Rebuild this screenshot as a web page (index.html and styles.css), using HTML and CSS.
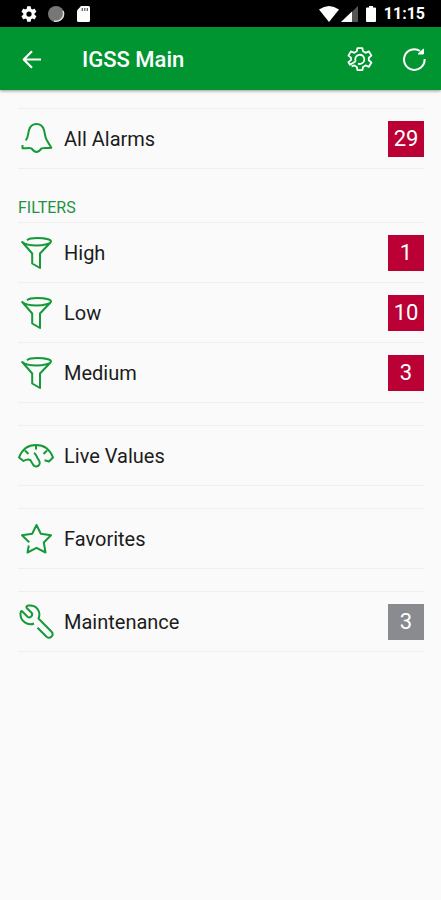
FILE: index.html
```
<!DOCTYPE html>
<html lang="en">
<head>
  <meta charset="UTF-8">
  <meta name="viewport" content="width=device-width, initial-scale=1.0">
  <title>IGSS Main</title>
  <link rel="stylesheet" href="styles.css">
</head>
<body>
  <!-- icons used more than once -->
  <svg class="sprite" aria-hidden="true">
    <symbol id="funnel" viewBox="0 0 36 36">
      <path d="M9 5.200C11 3.600 15 3 19 3c8 0 14 1.500 14 3.500S26 10.500 18.500 10.500C11 10.500 6.500 9 4.200 7L14.200 18.500V28.500L22 33V18.500L32.500 7.500"/>
    </symbol>
  </svg>

  <div class="status-bar">
    <div class="status-group">
      <svg class="status-icon" viewBox="0 0 24 24" aria-hidden="true">
        <path fill="#fff" d="M19.400 13a7.500 7.500 0 0 0 0-2l2.200-1.700a.5.5 0 0 0 .1-.6l-2.100-3.600a.5.5 0 0 0-.6-.2l-2.500 1a7.500 7.500 0 0 0-1.700-1L14.400 2.200a.5.500 0 0 0-.5-.4h-4a.5.500 0 0 0-.5.4L9 4.900a8 8 0 0 0-1.700 1l-2.500-1a.5.500 0 0 0-.6.2L2.100 8.700a.5.500 0 0 0 .1.600L4.400 11a7.500 7.500 0 0 0 0 2l-2.200 1.700a.5.500 0 0 0-.1.600l2.100 3.600c.1.200.4.300.6.200l2.500-1a7.500 7.500 0 0 0 1.700 1l.4 2.700c0 .2.200.4.500.4h4c.3 0 .5-.2.500-.4l.4-2.700a8 8 0 0 0 1.700-1l2.500 1c.2.100.5 0 .6-.2l2.100-3.600a.5.500 0 0 0-.1-.6zM12 15.500a3.500 3.500 0 1 1 0-7 3.500 3.500 0 0 1 0 7z"/>
      </svg>
      <svg class="status-icon" viewBox="0 0 18 18" aria-hidden="true">
        <circle cx="9" cy="9" r="8" fill="#777"/>
        <path d="M16 6a7.500 7.500 0 0 1-9 10" fill="none" stroke="#ddd" stroke-width="1.500"/>
      </svg>
      <svg class="status-icon" viewBox="0 0 18 18" aria-hidden="true">
        <path fill="#fff" d="M7 1h7.500a1.500 1.500 0 0 1 1.500 1.500v13a1.500 1.500 0 0 1-1.500 1.500h-10A1.500 1.500 0 0 1 3 15.500V5.500z"/>
        <path stroke="#555" stroke-width="1.200" d="M8.300 3v3M10.800 3v3M13.300 3v3"/>
      </svg>
    </div>
    <div class="status-group status-right">
      <svg class="wifi" viewBox="0 0 20 18" aria-hidden="true">
        <path fill="#fff" d="M0 4.500Q10-2.500 20 4.500L10 17z"/>
      </svg>
      <svg class="signal" viewBox="0 0 17 18" aria-hidden="true">
        <path fill="#555" d="M17 1v16H0z"/>
        <path fill="#fff" d="M11 6.600V17H0z"/>
      </svg>
      <svg class="battery" viewBox="0 0 12 18" aria-hidden="true">
        <path fill="#fff" d="M4 1h4v1.500h2a1 1 0 0 1 1 1V16a1 1 0 0 1-1 1H2a1 1 0 0 1-1-1V3.500a1 1 0 0 1 1-1h2z"/>
      </svg>
      <span class="clock">11:15</span>
    </div>
  </div>

  <header class="app-bar">
    <button class="icon-btn" type="button" aria-label="Back">
      <svg class="bar-icon" viewBox="0 0 28 28" aria-hidden="true">
        <path stroke-width="2.200" d="M23 13.500H6M14 5.200L5.700 13.500l8.300 8.300"/>
      </svg>
    </button>
    <h1>IGSS Main</h1>
    <button class="icon-btn" type="button" aria-label="Settings">
      <svg class="bar-icon" viewBox="0 0 28 28" aria-hidden="true">
        <path d="M9.500 15.500l-5.600 3.200-1.500-2.600 2.600-2v-2.500l-2.600-2 2.500-4.200 3.400 1.400 2.500-1.500.6-3.200h5l.6 3.200 2.500 1.500 3.400-1.400 2.500 4.200-2.600 2.200v2.500l2.600 2.200-2.500 4.300-3.400-1.400-2.500 1.500-.6 3.300h-5l-.6-3.300-2.500-1.500-2.700 1"/>
        <path d="M9.700 15.500A4.600 4.600 0 1 1 12 17.600"/>
      </svg>
    </button>
    <button class="icon-btn" type="button" aria-label="Refresh">
      <svg class="bar-icon" viewBox="0 0 28 28" aria-hidden="true">
        <path stroke-width="2" d="M24.600 13A10.300 10.300 0 1 1 20 5"/>
        <path fill="#fff" stroke-width="1" d="M23.500 3v5h-5.300z"/>
      </svg>
    </button>
  </header>

  <main>
    <nav class="list">
      <a class="row" href="#alarms">
        <svg class="row-icon" viewBox="0 0 36 36" aria-hidden="true">
          <path d="M7.700 19.500C10.500 16 10 12.500 11 9 12.200 5 15 3 18.500 3S24.800 5 26 9c1 3.500.8 6.500 2.700 10L33.300 26.800C30 27.500 27 26.600 23.500 27.400 22 29.500 20.500 31 18.500 31S15 29.500 13.500 27.400C10.500 26.600 8 27.500 4.500 27.200V24"/>
        </svg>
        <span class="label">All Alarms</span>
        <span class="badge">29</span>
      </a>
    </nav>

    <h2>FILTERS</h2>
    <nav class="list">
      <a class="row" href="#high">
        <svg class="row-icon" aria-hidden="true"><use href="#funnel"/></svg>
        <span class="label">High</span>
        <span class="badge">1</span>
      </a>
      <a class="row" href="#low">
        <svg class="row-icon" aria-hidden="true"><use href="#funnel"/></svg>
        <span class="label">Low</span>
        <span class="badge">10</span>
      </a>
      <a class="row" href="#medium">
        <svg class="row-icon" aria-hidden="true"><use href="#funnel"/></svg>
        <span class="label">Medium</span>
        <span class="badge">3</span>
      </a>
    </nav>

    <nav class="list">
      <a class="row" href="#live">
        <svg class="row-icon" viewBox="0 0 36 36" aria-hidden="true">
          <path d="M26.500 22.300l4.500 1.200L35 19.500C32 11.500 26.500 7 18 7S4 11.500 1 19.500l4.500 3.500C8 21.500 10 21 12.300 22L15 26.500c1 2.300 4.800 2.800 6.200.3 1-1.800.5-3.500-.7-5.300C18.500 20 19 16.500 16 14.800M18 7.500v4M7 12.500l3.500 3.500M29 12.500L25.500 16"/>
        </svg>
        <span class="label">Live Values</span>
      </a>
    </nav>

    <nav class="list">
      <a class="row" href="#favorites">
        <svg class="row-icon" viewBox="0 0 36 36" aria-hidden="true">
          <path d="M11.200 21.200L4 14.300l10.200-1.500L18.500 4l4.300 8.800L33 14.300l-7.200 7.200 1.700 10-9-4.700-9 4.700 1.300-7"/>
        </svg>
        <span class="label">Favorites</span>
      </a>
    </nav>

    <nav class="list">
      <a class="row" href="#maintenance">
        <svg class="row-icon" viewBox="0 0 36 36" aria-hidden="true">
          <path d="M16 19.500C10 22 2 17.500 2.500 9.500c0-2 .8-3 1.800-2l5.500 5.500c2 1.500 5.500-1.500 4-4L9 4.200C7.800 3 8.500 2 10.500 1.600 18 .5 23.500 7 20.500 14.500L33.800 28c2.500 3-1.500 7.500-5 5L19.500 23.700"/>
        </svg>
        <span class="label">Maintenance</span>
        <span class="badge badge-gray">3</span>
      </a>
    </nav>
  </main>
</body>
</html>
```
FILE: styles.css
```
* {
  box-sizing: border-box;
}
body {
  margin: 0;
  min-height: 100vh;
  background: #fafafa;
  color: #1c1c1c;
  font-family: Roboto, sans-serif;
}
.sprite {
  display: none;
}

/* status bar */
.status-bar {
  display: flex;
  justify-content: space-between;
  align-items: center;
  height: 27px;
  padding: 0 16px 0 20px;
  background: #000;
  color: #fff;
}
.status-group {
  display: flex;
  align-items: center;
  gap: 9px;
}
.status-right {
  gap: 2px;
}
.status-icon {
  width: 18px;
  height: 18px;
}
.wifi {
  width: 20px;
  height: 18px;
}
.signal {
  width: 17px;
  height: 18px;
}
.battery {
  width: 12px;
  height: 18px;
  margin: 0 5px;
}
.clock {
  font-size: 16px;
  font-weight: 700;
  line-height: 20px;
}

/* app bar */
.app-bar {
  display: flex;
  align-items: center;
  height: 63px;
  padding: 2px 13px 0 18px;
  background: #009530;
  color: #fff;
  box-shadow: 0 1px 3px rgba(0, 0, 0, 0.4);
}
.app-bar h1 {
  flex: 1;
  margin: 0 0 0 36px;
  font-size: 22px;
  font-weight: 500;
  line-height: 28px;
}
.icon-btn {
  display: flex;
  padding: 0;
  border: none;
  background: none;
  cursor: pointer;
}
.icon-btn + .icon-btn {
  margin-left: 26px;
}
.bar-icon {
  width: 28px;
  height: 28px;
  fill: none;
  stroke: #fff;
  stroke-width: 1.8;
  stroke-linejoin: round;
}

/* menu list */
main {
  padding: 18px 17px 18px 18px;
}
.list {
  border-bottom: 1px solid #efefef;
}
.list + .list {
  margin-top: 22px;
}
.row {
  display: flex;
  align-items: center;
  height: 60px;
  border-top: 1px solid #efefef;
  color: inherit;
  text-decoration: none;
}
.row-icon {
  width: 36px;
  height: 36px;
  fill: none;
  stroke: #149a38;
  stroke-width: 2;
  stroke-linejoin: round;
}
.label {
  flex: 1;
  margin-left: 10px;
  font-size: 20px;
  line-height: 28px;
}
.badge {
  width: 36px;
  background: #ba0035;
  color: #fff;
  font-size: 22px;
  line-height: 36px;
  text-align: center;
}
.badge-gray {
  background: #8a8b8e;
}
h2 {
  margin: 29px 0 4px;
  color: #23913f;
  font-size: 16px;
  font-weight: 400;
  line-height: 20px;
}
```
